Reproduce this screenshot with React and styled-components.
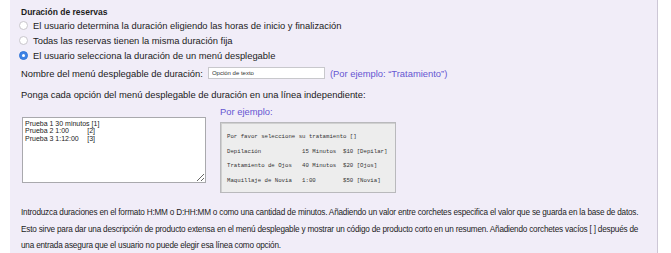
import React from "react";
import styled, { createGlobalStyle } from "styled-components";

const Global = createGlobalStyle`
  html, body { margin: 0; padding: 0; background: #ffffff; }
  body { font-family: "Liberation Sans", Arial, Helvetica, sans-serif; color: #1a1a1a; }
`;

const Page = styled.div`
  padding-left: 10px;
  width: 671px;
  box-sizing: border-box;
`;

const Panel = styled.section`
  width: 648px;
  box-sizing: border-box;
  background: #f1edf8;
  border-right: 1px solid #cdc7d6;
  padding: 6px 10px 0 11px;
`;

const Title = styled.h3`
  margin: 0;
  font-size: 8.5px;
  line-height: 12px;
  font-weight: bold;
  color: #1c1c1c;
`;

const RadioList = styled.div`
  display: flex;
  flex-direction: column;
`;

const RadioRow = styled.label`
  display: flex;
  align-items: center;
  height: 15px;
  font-size: 9.4px;
  color: #1c1c1c;
  margin-left: -2px;
`;

const Radio = styled.span`
  width: 9px;
  height: 9px;
  border-radius: 50%;
  box-sizing: border-box;
  margin-right: 5px;
  flex: none;
  display: flex;
  align-items: center;
  justify-content: center;
  background: ${(p) => (p.$checked ? "#3d82e6" : "#ffffff")};
  border: 1px solid ${(p) => (p.$checked ? "#3577d8" : "#c9c6cc")};
  &::after {
    content: "";
    width: 3px;
    height: 3px;
    border-radius: 50%;
    background: #ffffff;
    display: ${(p) => (p.$checked ? "block" : "none")};
  }
`;

const FieldRow = styled.div`
  display: flex;
  align-items: center;
  height: 14px;
  margin-top: 3px;
  font-size: 9.4px;
`;

const TextInput = styled.input`
  width: 117px;
  height: 12px;
  box-sizing: border-box;
  margin: 0 5px 0 5px;
  padding: 0 3px;
  border: 1px solid #c8c8cc;
  background: #ffffff;
  font-family: "Liberation Sans", Arial, sans-serif;
  font-size: 6px;
  color: #333;
  outline: none;
`;

const Hint = styled.span`
  color: #6656d2;
  font-size: 9.4px;
`;

const Instruction = styled.p`
  margin: 9px 0 0 0;
  font-size: 9.4px;
  line-height: 12px;
`;

const Columns = styled.div`
  display: flex;
  gap: 14px;
  margin-top: 5px;
`;

const OptionsArea = styled.textarea`
  width: 184px;
  height: 66px;
  box-sizing: border-box;
  margin: 11px 0 0 1px;
  padding: 2px 2px;
  border: 1px solid #a9a9ad;
  background: #ffffff;
  font-family: "Liberation Sans", Arial, sans-serif;
  font-size: 7px;
  line-height: 7.4px;
  color: #222;
  resize: both;
  tab-size: 8;
  white-space: pre;
  outline: none;
`;

const ExampleCol = styled.div`
  display: flex;
  flex-direction: column;
`;

const ExampleBox = styled.div`
  margin-top: 5px;
  width: 176px;
  height: 71px;
  box-sizing: border-box;
  background: #ededed;
  border: 1px solid #b9b9bc;
  box-shadow: inset 1px 1px 0 #d0d0d0;
  padding: 7px 0 0 6px;
`;

const MonoLine = styled.div`
  font-family: "Liberation Mono", "Courier New", monospace;
  font-size: 5.7px;
  line-height: 14.6px;
  white-space: pre;
  color: #333;
`;

const Notes = styled.p`
  margin: 12px 0 0 0;
  font-size: 8.2px;
  letter-spacing: -0.2px;
  line-height: 16.5px;
  color: #1c1c1c;
`;

const radios = [
  "El usuario determina la duración eligiendo las horas de inicio y finalización",
  "Todas las reservas tienen la misma duración fija",
  "El usuario selecciona la duración de un menú desplegable",
];

const example = [
  "Por favor seleccione su tratamiento []",
  "Depilación            15 Minutos  $10 [Depilar]",
  "Tratamiento de Ojos   40 Minutos  $20 [Ojos]",
  "Maquillaje de Novia   1:00        $50 [Novia]",
];

export default function App() {
  return (
    <Page>
      <Global />
      <Panel>
        <Title>Duración de reservas</Title>
        <RadioList>
          {radios.map((r, i) => (
            <RadioRow key={i}>
              <Radio $checked={i === 2} />
              {r}
            </RadioRow>
          ))}
        </RadioList>
        <FieldRow>
          Nombre del menú desplegable de duración:
          <TextInput defaultValue="Opción de texto" />
          <Hint>(Por ejemplo: “Tratamiento”)</Hint>
        </FieldRow>
        <Instruction>
          Ponga cada opción del menú desplegable de duración en una línea independiente:
        </Instruction>
        <Columns>
          <OptionsArea
            defaultValue={"Prueba 1 30 minutos [1]\nPrueba 2 1:00\t\t[2]\nPrueba 3 1:12:00\t[3]"}
          />
          <ExampleCol>
            <Hint>Por ejemplo:</Hint>
            <ExampleBox>
              {example.map((l, i) => (
                <MonoLine key={i}>{l}</MonoLine>
              ))}
            </ExampleBox>
          </ExampleCol>
        </Columns>
        <Notes>
          Introduzca duraciones en el formato H:MM o D:HH:MM o como una cantidad de minutos. Añadiendo un valor entre corchetes especifica el valor que se guarda en la base de datos. Esto sirve para dar una descripción de producto extensa en el menú desplegable y mostrar un código de producto corto en un resumen. Añadiendo corchetes vacíos [ ] después de una entrada asegura que el usuario no puede elegir esa línea como opción.
        </Notes>
      </Panel>
    </Page>
  );
}
